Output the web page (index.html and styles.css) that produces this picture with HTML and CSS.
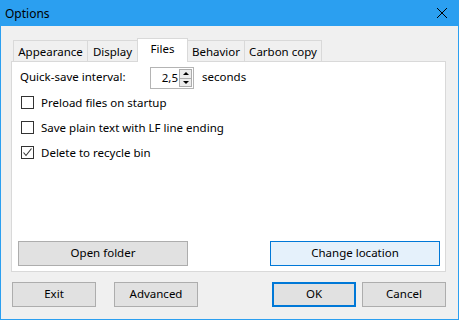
FILE: index.html
```html
<!DOCTYPE html>
<html lang="en">
  <head>
    <meta charset="UTF-8" />
    <title>Options</title>
    <link rel="stylesheet" href="styles.css">
  </head>

  <body>
    <div class="window">
      <div class="titlebar">
        <span class="title">Options</span>
        <svg class="close" width="12" height="12" viewBox="0 0 12 12">
          <path d="M1 1 L11 11 M11 1 L1 11" stroke="#000" stroke-width="1" fill="none" />
        </svg>
      </div>

      <div class="dialog-body">
        <div class="tabs">
          <div class="tab tab-appearance">Appearance</div>
          <div class="tab tab-display">Display</div>
          <div class="tab tab-files active">Files</div>
          <div class="tab tab-behavior">Behavior</div>
          <div class="tab tab-carbon">Carbon copy</div>
        </div>

        <div class="panel">
          <div class="field-row">
            <span class="field-label">Quick-save interval:</span>
            <div class="spin">
              <span class="spin-value">2,5</span>
              <div class="spin-arrows">
                <span class="spin-btn up"></span>
                <span class="spin-btn down"></span>
              </div>
            </div>
            <span class="field-unit">seconds</span>
          </div>

          <label class="check"><span class="box"></span>Preload files on startup</label>
          <label class="check"><span class="box"></span>Save plain text with LF line ending</label>
          <label class="check">
            <span class="box checked">
              <svg width="11" height="11" viewBox="0 0 11 11">
                <path d="M1.5 5.5 L4 8.5 L9.5 1.5" stroke="#333" stroke-width="1.1" fill="none" />
              </svg>
            </span>Delete to recycle bin
          </label>

          <div class="panel-buttons">
            <button class="btn wide">Open folder</button>
            <button class="btn wide hot">Change location</button>
          </div>
        </div>

        <div class="dialog-buttons">
          <button class="btn">Exit</button>
          <button class="btn advanced">Advanced</button>
          <button class="btn default ok">OK</button>
          <button class="btn">Cancel</button>
        </div>
      </div>
    </div>
  </body>
</html>
```

FILE: styles.css
```css
:root {
  --accent: #2b9ff0;
  --face: #f0f0f0;
  --line: #d9d9d9;
  --btn-bg: #e1e1e1;
  --btn-border: #adadad;
  --focus: #0078d7;
}

html,
body {
  margin: 0;
  height: 100%;
  font-family: "Segoe UI", "Noto Sans", Arial, sans-serif;
  font-size: 11.5px;
  color: #000;
  background: var(--face);
  overflow: hidden;
}

.window {
  width: 459px;
  height: 320px;
  box-sizing: border-box;
  border: 1px solid var(--accent);
  border-top: none;
  background: var(--face);
  display: flex;
  flex-direction: column;
}

.titlebar {
  height: 26px;
  flex: none;
  background: var(--accent);
  display: flex;
  align-items: center;
  justify-content: space-between;
  padding: 0 10px 0 4px;
}

.title {
  font-size: 12px;
}

.dialog-body {
  flex: 1;
  padding: 12px 12px 0 10px;
  display: flex;
  flex-direction: column;
}

/* tab strip */
.tabs {
  display: flex;
  align-items: flex-end;
  height: 23px;
  padding-left: 2px;
  position: relative;
  z-index: 1;
}

.tab {
  box-sizing: border-box;
  height: 21px;
  border: 1px solid var(--line);
  border-bottom: none;
  margin-right: -1px;
  display: flex;
  align-items: center;
  justify-content: center;
  background: var(--face);
}

.tab-appearance { width: 75px; }
.tab-display { width: 51px; }
.tab-files { width: 51px; }
.tab-behavior { width: 58px; }
.tab-carbon { width: 78px; }

.tab.active {
  height: 24px;
  margin-bottom: -1px;
  background: #fff;
  align-items: flex-start;
  padding-top: 2px;
  position: relative;
  z-index: 2;
}

.panel {
  box-sizing: border-box;
  height: 211px;
  width: 435px;
  background: #fff;
  border: 1px solid var(--line);
  padding: 5px 5px 5px 8px;
  display: flex;
  flex-direction: column;
}

.field-row {
  display: flex;
  align-items: center;
  height: 22px;
}

.field-label {
  width: 130px;
  margin-top: -3px;
}

.field-unit {
  margin-left: 8px;
  margin-top: -3px;
}

/* spin box */
.spin {
  box-sizing: border-box;
  width: 44px;
  height: 22px;
  border: 1px solid #b4b4b4;
  display: flex;
  align-items: stretch;
}

.spin-value {
  flex: 1;
  text-align: right;
  padding-right: 1px;
  line-height: 19px;
}

.spin-arrows {
  width: 13px;
  display: flex;
  flex-direction: column;
  padding: 1px 1px 1px 0;
}

.spin-btn {
  flex: 1;
  box-sizing: border-box;
  border: 1px solid #acacac;
  background: #ececec;
  display: flex;
  align-items: center;
  justify-content: center;
}

.spin-btn + .spin-btn {
  border-top: none;
}

.spin-btn::after {
  content: "";
  border-left: 3px solid transparent;
  border-right: 3px solid transparent;
}

.spin-btn.up::after {
  border-bottom: 3px solid #000;
}

.spin-btn.down::after {
  border-top: 3px solid #000;
}

/* checkboxes */
.check {
  display: flex;
  align-items: center;
  height: 13px;
  margin-top: 12px;
  padding-left: 1px;
}

.field-row + .check {
  margin-top: 7px;
}

.box {
  box-sizing: border-box;
  width: 13px;
  height: 13px;
  border: 1px solid #333;
  background: #fff;
  margin-right: 7px;
  display: flex;
  align-items: center;
  justify-content: center;
}

/* buttons */
.btn {
  box-sizing: border-box;
  width: 84px;
  height: 25px;
  margin: 0;
  padding: 0 0 2px;
  font: inherit;
  color: #000;
  background: var(--btn-bg);
  border: 1px solid var(--btn-border);
}

.btn.wide {
  width: 170px;
}

.btn.hot {
  background: #e5f1fb;
  border-color: var(--focus);
}

.btn.default {
  border: 2px solid var(--focus);
}

.panel-buttons {
  margin-top: auto;
  display: flex;
  justify-content: space-between;
  margin-left: -2px;
}

.dialog-buttons {
  display: flex;
  margin-top: 10px;
  padding-left: 1px;
}

.advanced {
  margin-left: 18px;
}

.ok {
  margin-left: auto;
  margin-right: 6px;
}
```
